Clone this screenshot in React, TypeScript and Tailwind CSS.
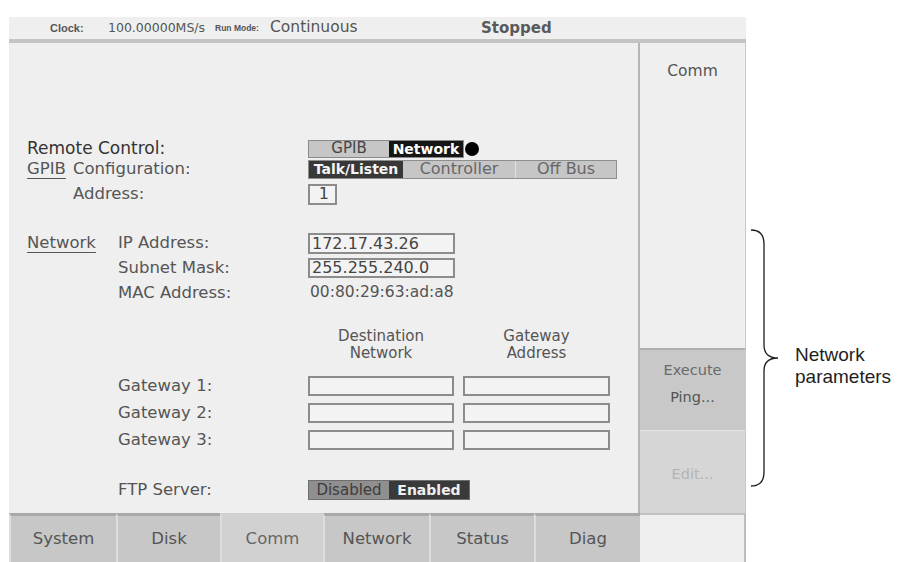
import React from 'react';

// Comm settings page of the instrument's utility screen, plus the side note on the right

const LABEL = 'text-[16.5px] text-[#555] leading-none whitespace-nowrap';

const Field: React.FC<{ w: string; value?: string; h?: string }> = ({ w, value, h = 'h-[21px]' }) => (
    <div className={`${w} ${h} border-2 border-[#8c8c8c] bg-[#f3f3f3] flex items-center px-[2px] text-[16px] text-[#444] leading-none`}>
        {value}
    </div>
);

const GatewayRow: React.FC<{ label: string; mt: string }> = ({ label, mt }) => (
    <div className={`flex items-center h-[20px] ${mt}`}>
        <div className="w-[91px]" />
        <div className={`w-[190px] ${LABEL}`}>{label}</div>
        <Field w="w-[146px]" h="h-[20px]" />
        <div className="w-[9px]" />
        <Field w="w-[147px]" h="h-[20px]" />
    </div>
);

const tabs = [
    { name: 'System', w: 'w-[107px]' },
    { name: 'Disk', w: 'w-[104px]' },
    { name: 'Comm', w: 'w-[103px]', active: true },
    { name: 'Network', w: 'w-[106px]' },
    { name: 'Status', w: 'w-[105px]' },
    { name: 'Diag', w: 'w-[106px]' },
];

const App: React.FC = () => {
    return (
        <div className="w-[897px] h-[562px] bg-white flex overflow-hidden font-['DejaVu_Sans',sans-serif]">
            <div className="ml-[9px] mt-[17px] w-[737px] flex flex-col">
                {/* status bar */}
                <div className="h-[22px] bg-[#efefef] flex items-center pl-[41px] text-[#555] whitespace-nowrap">
                    <span className="w-[58px] text-[11px] font-bold font-['Liberation_Sans',Arial,sans-serif]">Clock:</span>
                    <span className="w-[107px] text-[12.5px]">100.00000MS/s</span>
                    <span className="w-[55px] text-[8.5px] font-bold font-['Liberation_Sans',Arial,sans-serif]">Run Mode:</span>
                    <span className="w-[211px] text-[15.5px]">Continuous</span>
                    <span className="text-[15px] font-bold text-[#5a5a5a]">Stopped</span>
                </div>
                <div className="h-[4px] bg-[#c4c4c4]" />

                <div className="flex h-[470px]">
                    {/* main settings panel */}
                    <div className="w-[631px] bg-[#efefef] border-r-2 border-[#b5b5b5] pl-[18px] flex flex-col">
                        <div className="flex items-center h-[19px] mt-[96px]">
                            <div className="w-[281px] text-[17px] text-[#333] leading-none">Remote Control:</div>
                            <div className="flex h-[18px] border border-[#8a8a8a] text-[15px] leading-none">
                                <div className="w-[80px] bg-[#c6c6c6] text-[#444] flex items-center justify-center">GPIB</div>
                                <div className="w-[74px] bg-[#151515] text-white font-bold flex items-center justify-center text-[14px]">Network</div>
                            </div>
                            <div className="ml-[1px] w-[14px] h-[14px] rounded-full bg-black" />
                        </div>

                        <div className="flex items-center h-[20px] mt-[1px]">
                            <div className={`w-[46px] ${LABEL} underline underline-offset-[4px] decoration-[#555]`}>GPIB</div>
                            <div className={`w-[235px] ${LABEL}`}>Configuration:</div>
                            <div className="flex h-[19px] border border-[#8e8e8e] text-[16px] leading-none">
                                <div className="w-[94px] bg-[#383838] text-[#f4f4f4] font-bold text-[14px] flex items-center justify-center">Talk/Listen</div>
                                <div className="w-[113px] bg-[#c6c6c6] text-[#666] flex items-center justify-center border-r border-[#e2e2e2]">Controller</div>
                                <div className="w-[100px] bg-[#c6c6c6] text-[#666] flex items-center justify-center">Off Bus</div>
                            </div>
                        </div>

                        <div className="flex items-center h-[22px] mt-[4px]">
                            <div className="w-[46px]" />
                            <div className={`w-[235px] ${LABEL}`}>Address:</div>
                            <div className="w-[29px] h-[21px] border-2 border-[#8c8c8c] bg-[#f3f3f3] flex items-center justify-end pr-[6px] text-[16px] text-[#444] leading-none">1</div>
                        </div>

                        <div className="flex items-center h-[21px] mt-[28px]">
                            <div className={`w-[91px] ${LABEL} underline underline-offset-[4px] decoration-[#555]`}>Network</div>
                            <div className={`w-[190px] ${LABEL}`}>IP Address:</div>
                            <Field w="w-[147px]" value="172.17.43.26" />
                        </div>
                        <div className="flex items-center h-[20px] mt-[4px]">
                            <div className="w-[91px]" />
                            <div className={`w-[190px] ${LABEL}`}>Subnet Mask:</div>
                            <Field w="w-[147px]" h="h-[20px]" value="255.255.240.0" />
                        </div>
                        <div className="flex items-center h-[20px] mt-[5px]">
                            <div className="w-[91px]" />
                            <div className={`w-[190px] ${LABEL}`}>MAC Address:</div>
                            <div className="pl-[2px] text-[15.5px] text-[#555] leading-none">00:80:29:63:ad:a8</div>
                        </div>

                        <div className="flex h-[34px] mt-[25px] text-[15px] text-[#555] leading-[17px]">
                            <div className="w-[281px]" />
                            <div className="w-[146px] text-center">Destination<br />Network</div>
                            <div className="w-[9px]" />
                            <div className="w-[147px] text-center">Gateway<br />Address</div>
                        </div>

                        <GatewayRow label="Gateway 1:" mt="mt-[14px]" />
                        <GatewayRow label="Gateway 2:" mt="mt-[7px]" />
                        <GatewayRow label="Gateway 3:" mt="mt-[7px]" />

                        <div className="flex items-center h-[20px] mt-[30px]">
                            <div className="w-[91px]" />
                            <div className={`w-[190px] ${LABEL}`}>FTP Server:</div>
                            <div className="flex h-[20px] border border-[#6e6e6e] text-[15px] leading-none">
                                <div className="w-[80px] bg-[#8f8f8f] text-[#3c3c3c] flex items-center justify-center">Disabled</div>
                                <div className="w-[80px] bg-[#3a3a3a] text-[#f0f0f0] font-bold text-[14px] flex items-center justify-center">Enabled</div>
                            </div>
                        </div>
                    </div>

                    {/* side menu */}
                    <div className="w-[106px] flex flex-col border-r border-[#c8c8c8]">
                        <div className="h-[305px] bg-[#efefef] flex justify-center pt-[21px] text-[15.5px] text-[#555] leading-none">Comm</div>
                        <div className="h-[82px] bg-[#c8c8c8] border-t-2 border-[#b0b0b0] flex flex-col items-center pt-[13px] gap-[12px] text-[14.5px] text-[#6a6a6a] leading-none">
                            <span>Execute</span>
                            <span className="text-[#555]">Ping...</span>
                        </div>
                        <div className="h-[83px] bg-[#d6d6d6] border-t border-[#e6e6e6] flex justify-center pt-[36px] text-[14.5px] text-[#b4b4b4] leading-none">Edit...</div>
                    </div>
                </div>

                {/* bottom menu tabs */}
                <div className="h-[49px] flex">
                    {tabs.map((t) => (
                        <div
                            key={t.name}
                            className={`${t.w} border-l-2 border-[#dedede] flex items-center justify-center text-[16.5px] leading-none ${t.active ? 'bg-[#d1d1d1] border-t-[3px] border-t-[#d1d1d1] text-[#666]' : 'bg-[#c7c7c7] border-t-[3px] border-t-[#a9a9a9] text-[#555]'}`}
                        >
                            {t.name}
                        </div>
                    ))}
                    <div className="w-[106px] bg-[#efefef] border-t-2 border-t-[#c0c0c0] border-r-2 border-[#bdbdbd]" />
                </div>
            </div>

            {/* bracket note */}
            <div className="flex items-start pt-[225px] pl-[4px]">
                <svg width="35" height="266" viewBox="0 0 35 266" fill="none">
                    <path
                        d="M1 5 Q14 5 14 19 L14 120 Q14 133 28 133 Q14 133 14 146 L14 247 Q14 261 1 261"
                        stroke="#1e1e1e"
                        strokeWidth="1.3"
                    />
                </svg>
                <div className="ml-[10px] mt-[119px] font-['Liberation_Sans',Arial,sans-serif] text-[19px] leading-[22px] text-[#1e1e1e]">
                    Network
                    <br />
                    parameters
                </div>
            </div>
        </div>
    );
};

export default App;
